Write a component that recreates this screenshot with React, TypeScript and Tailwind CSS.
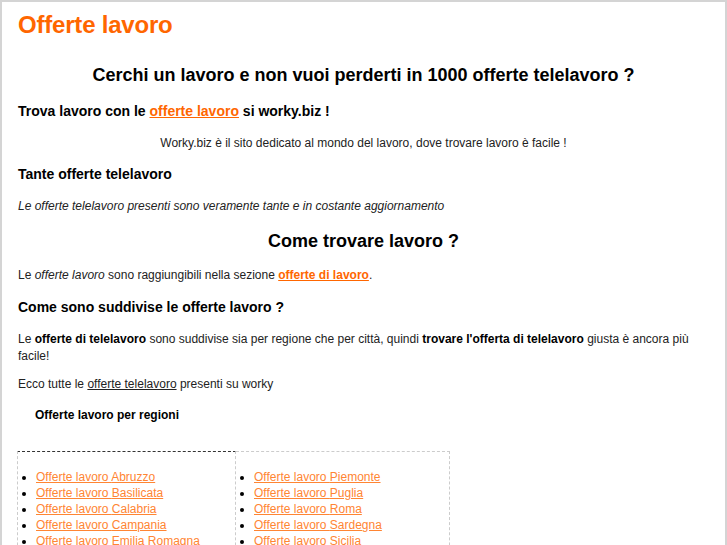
import React from "react";

const leftRegions = [
  "Abruzzo",
  "Basilicata",
  "Calabria",
  "Campania",
  "Emilia Romagna",
  "Friuli Venezia Giulia",
  "Lazio",
];

const rightRegions = [
  "Piemonte",
  "Puglia",
  "Roma",
  "Sardegna",
  "Sicilia",
  "Toscana",
  "Trentino Alto Adige",
];

function RegionList({ items }: { items: string[] }) {
  return (
    <ul className="list-disc pl-[18px] pt-[17px] text-[12px] leading-[16px] marker:text-black">
      {items.map((r) => (
        <li key={r}>
          <a href="#" className="text-[#ff8533] underline decoration-[#ff8533]">
            Offerte lavoro {r}
          </a>
        </li>
      ))}
    </ul>
  );
}

export default function App() {
  return (
    <div
      className="min-h-[545px] border-t-2 border-l-2 border-r-2 border-[#d4d4d4] bg-white text-[#222] w-[727px] overflow-hidden"
      style={{ fontFamily: '"Liberation Sans", Arial, sans-serif' }}
    >
      <div className="px-4 h-[543px] overflow-hidden">
        <h1 className="mt-[9px] text-[24px] leading-[28px] font-bold tracking-[-0.2px] text-[#ff6600]">
          Offerte lavoro
        </h1>

        <h2 className="mt-[25px] text-center text-[18px] leading-[22px] font-bold text-black">
          Cerchi un lavoro e non vuoi perderti in 1000 offerte telelavoro ?
        </h2>

        <h3 className="mt-[16px] text-[14px] leading-[18px] font-bold text-black">
          Trova lavoro con le{" "}
          <a href="#" className="text-[#ff6600] underline">
            offerte lavoro
          </a>{" "}
          si worky.biz !
        </h3>

        <p className="mt-[15px] text-center text-[12px] leading-[16px]">
          Worky.biz è il sito dedicato al mondo del lavoro, dove trovare lavoro è facile !
        </p>

        <h3 className="mt-[14px] text-[14px] leading-[18px] font-bold text-black">
          Tante offerte telelavoro
        </h3>

        <p className="mt-[15px] text-[12px] leading-[16px] italic">
          Le offerte telelavoro presenti sono veramente tante e in costante aggiornamento
        </p>

        <h2 className="mt-[16px] text-center text-[18px] leading-[22px] font-bold text-black">
          Come trovare lavoro ?
        </h2>

        <p className="mt-[15px] text-[12px] leading-[16px]">
          Le <em>offerte lavoro</em> sono raggiungibili nella sezione{" "}
          <a href="#" className="font-bold text-[#ff6600] underline">
            offerte di lavoro
          </a>
          .
        </p>

        <h3 className="mt-[15px] text-[14px] leading-[18px] font-bold text-black">
          Come sono suddivise le offerte lavoro ?
        </h3>

        <p className="mt-[15px] text-[12px] leading-[17px]">
          Le <strong className="text-black">offerte di telelavoro</strong> sono suddivise sia
          per regione che per città, quindi{" "}
          <strong className="text-black">trovare l'offerta di telelavoro</strong> giusta è
          ancora più facile!
        </p>

        <p className="mt-[11px] text-[12px] leading-[16px]">
          Ecco tutte le{" "}
          <a href="#" className="text-[#222] underline">
            offerte telelavoro
          </a>{" "}
          presenti su worky
        </p>

        <h4 className="mt-[15px] pl-[17px] text-[12px] leading-[16px] font-bold text-black">
          Offerte lavoro per regioni
        </h4>

        <div className="mt-[28px] -ml-px flex items-start">
          <div className="w-[219px] border-t border-dashed border-t-[#333] border-l border-l-[#ccc] border-r border-r-[#ccc]">
            <RegionList items={leftRegions} />
          </div>
          <div className="w-[214px] border-t border-dashed border-t-[#ccc] border-r border-r-[#ccc]">
            <RegionList items={rightRegions} />
          </div>
        </div>
      </div>
    </div>
  );
}
